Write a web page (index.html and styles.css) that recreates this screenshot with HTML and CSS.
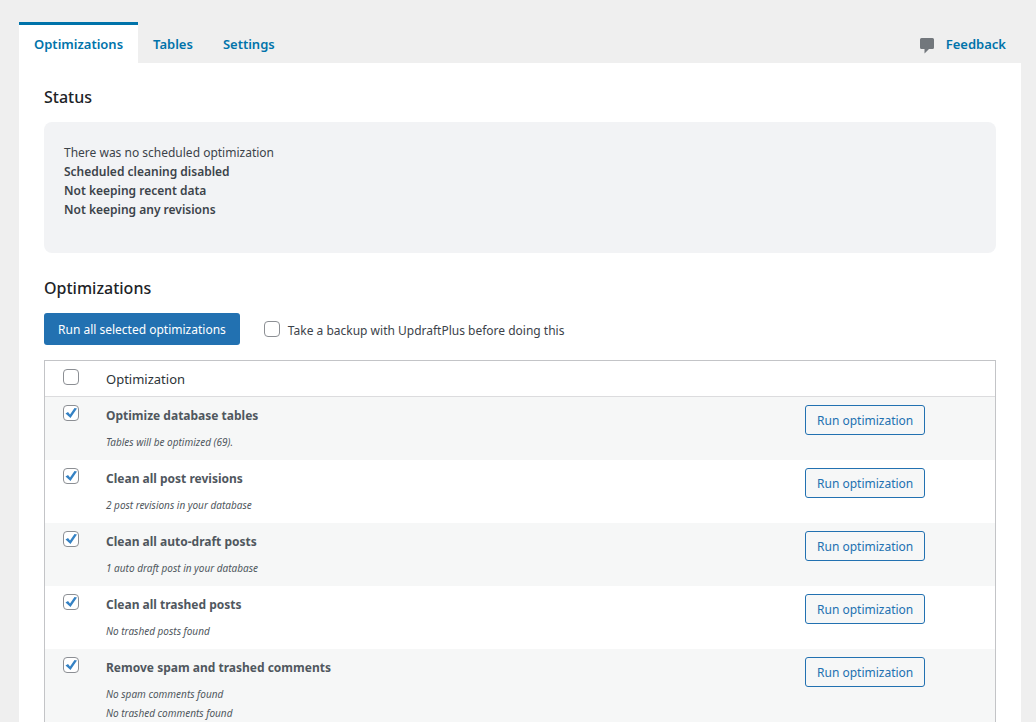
FILE: index.html
```
<!DOCTYPE html>
<html lang="en">
<head>
    <meta charset="UTF-8">
    <meta name="viewport" content="width=device-width, initial-scale=1.0">
    <title>Optimizations</title>
    <link rel="stylesheet" href="styles.css">
</head>
<body>
    <div class="wrap">
        <nav class="tabs">
            <a class="tab active" href="#optimizations">Optimizations</a>
            <a class="tab" href="#tables">Tables</a>
            <a class="tab" href="#settings">Settings</a>
            <a class="tab feedback" href="#feedback">
                <svg width="14" height="16" viewBox="0 0 14 16" aria-hidden="true">
                    <path d="M1.500 0h11q1.500 0 1.500 1.500v8q0 1.500-1.500 1.500H9L4.500 15.500V11h-3Q0 11 0 9.500v-8Q0 0 1.500 0z" fill="#72777c"/>
                </svg>
                Feedback
            </a>
        </nav>
        <main class="panel">
            <h2>Status</h2>
            <div class="status">
                <p>There was no scheduled optimization</p>
                <p><strong>Scheduled cleaning disabled</strong></p>
                <p><strong>Not keeping recent data</strong></p>
                <p><strong>Not keeping any revisions</strong></p>
            </div>

            <h2>Optimizations</h2>
            <div class="actions">
                <button type="button" class="button-primary">Run all selected optimizations</button>
                <input type="checkbox" id="backup">
                <label for="backup">Take a backup with UpdraftPlus before doing this</label>
            </div>

            <table class="optimizations">
                <thead>
                    <tr>
                        <th class="check"><input type="checkbox" id="select-all" aria-label="Select all"></th>
                        <th colspan="2">Optimization</th>
                    </tr>
                </thead>
                <tbody>
                    <tr>
                        <td class="check"><input type="checkbox" id="opt-tables" checked></td>
                        <td>
                            <label for="opt-tables">Optimize database tables</label>
                            <p class="info">Tables will be optimized (69).</p>
                        </td>
                        <td class="run"><button type="button" class="button">Run optimization</button></td>
                    </tr>
                    <tr>
                        <td class="check"><input type="checkbox" id="opt-revisions" checked></td>
                        <td>
                            <label for="opt-revisions">Clean all post revisions</label>
                            <p class="info">2 post revisions in your database</p>
                        </td>
                        <td class="run"><button type="button" class="button">Run optimization</button></td>
                    </tr>
                    <tr>
                        <td class="check"><input type="checkbox" id="opt-drafts" checked></td>
                        <td>
                            <label for="opt-drafts">Clean all auto-draft posts</label>
                            <p class="info">1 auto draft post in your database</p>
                        </td>
                        <td class="run"><button type="button" class="button">Run optimization</button></td>
                    </tr>
                    <tr>
                        <td class="check"><input type="checkbox" id="opt-trash" checked></td>
                        <td>
                            <label for="opt-trash">Clean all trashed posts</label>
                            <p class="info">No trashed posts found</p>
                        </td>
                        <td class="run"><button type="button" class="button">Run optimization</button></td>
                    </tr>
                    <tr>
                        <td class="check"><input type="checkbox" id="opt-comments" checked></td>
                        <td>
                            <label for="opt-comments">Remove spam and trashed comments</label>
                            <p class="info">No spam comments found<br>No trashed comments found</p>
                        </td>
                        <td class="run"><button type="button" class="button">Run optimization</button></td>
                    </tr>
                </tbody>
            </table>
        </main>
    </div>
</body>
</html>
```
FILE: styles.css
```
* {
    box-sizing: border-box;
}
body {
    margin: 0;
    background-color: #efefef;
    color: #3c434a;
    font-family: "Segoe UI", "Noto Sans", sans-serif;
    font-size: 12px;
    line-height: 19px;
}
h2, p {
    margin: 0;
}
h2 {
    color: #1d2327;
    font-size: 16px;
    font-weight: 500;
    line-height: 24px;
}
strong {
    font-weight: 600;
}
.wrap {
    padding: 22px 15px 0 19px;
}
.tabs {
    display: flex;
}
.tab {
    padding: 11px 15px;
    border-top: 3px solid transparent;
    color: #0073aa;
    font-size: 13px;
    font-weight: 600;
    line-height: 16px;
    text-decoration: none;
}
.tab.active {
    background-color: white;
    border-top-color: #0073aa;
}
.feedback {
    display: flex;
    align-items: center;
    gap: 12px;
    margin-left: auto;
}
.feedback svg {
    margin-bottom: -4px;
}
.panel {
    padding: 22px 25px;
    background-color: white;
}
.status {
    margin: 13px 0 23px;
    padding: 21px 20px 34px;
    background-color: #f2f3f5;
    border-radius: 8px;
}
.actions {
    display: flex;
    align-items: center;
    margin: 13px 0 15px;
}
.actions label {
    margin-left: 8px;
    padding-top: 2px;
}
.button-primary {
    height: 32px;
    margin-right: 24px;
    padding: 0 14px;
    background-color: #2271b1;
    color: white;
    border: none;
    border-radius: 3px;
    font-family: inherit;
    font-size: 12px;
    cursor: pointer;
}
.button {
    height: 30px;
    padding: 0 11px;
    background-color: #f6f7f7;
    color: #2271b1;
    border: 1px solid #2271b1;
    border-radius: 3px;
    font-family: inherit;
    font-size: 12px;
    cursor: pointer;
}
input[type="checkbox"] {
    display: block;
    appearance: none;
    flex: none;
    width: 16px;
    height: 16px;
    margin: 0;
    background-color: white;
    border: 1px solid #8c8f94;
    border-radius: 4px;
}
input[type="checkbox"]:checked {
    background-image: url("data:image/svg+xml,%3Csvg xmlns='http://www.w3.org/2000/svg' viewBox='0 0 14 14'%3E%3Cpath d='M1.500 7.500L4 6l2 2.500L10.500 2 13 2.500 6.500 12z' fill='%233582c4'/%3E%3C/svg%3E");
}
.optimizations {
    width: 100%;
    border: 1px solid #c3c4c7;
    border-spacing: 0;
}
.optimizations th, .optimizations td {
    padding: 9px 10px 7px;
    text-align: left;
    vertical-align: top;
}
.optimizations th {
    border-bottom: 1px solid #dcdcde;
    color: #2c3338;
    font-size: 13px;
    font-weight: 400;
}
.optimizations td {
    height: 63px;
    color: #50575e;
}
.optimizations tbody tr:nth-child(odd) {
    background-color: #f6f7f7;
}
.optimizations .check {
    width: 51px;
    padding: 8px 0 0 18px;
}
.optimizations td label {
    font-weight: 700;
}
.optimizations .run {
    width: 200px;
    padding: 8px 10px;
}
.info {
    margin-top: 8px;
    font-size: 10px;
    font-style: italic;
}
```
